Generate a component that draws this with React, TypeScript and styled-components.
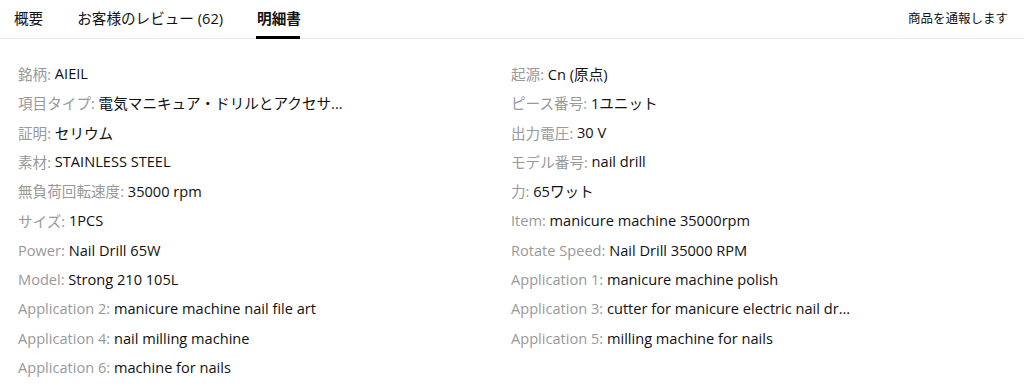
import styled, { createGlobalStyle } from "styled-components";

const GlobalStyle = createGlobalStyle`
  body {
    margin: 0;
    background: #fff;
    font-family: "Open Sans", "Noto Sans CJK JP", sans-serif;
    color: #111;
  }
`;

const tabs = [
  { label: "概要", active: false },
  { label: "お客様のレビュー (62)", active: false },
  { label: "明細書", active: true },
];

const specs: [string, string][] = [
  ["銘柄", "AIEIL"],
  ["起源", "Cn (原点)"],
  ["項目タイプ", "電気マニキュア・ドリルとアクセサ..."],
  ["ピース番号", "1ユニット"],
  ["証明", "セリウム"],
  ["出力電圧", "30 V"],
  ["素材", "STAINLESS STEEL"],
  ["モデル番号", "nail drill"],
  ["無負荷回転速度", "35000 rpm"],
  ["力", "65ワット"],
  ["サイズ", "1PCS"],
  ["Item", "manicure machine 35000rpm"],
  ["Power", "Nail Drill 65W"],
  ["Rotate Speed", "Nail Drill 35000 RPM"],
  ["Model", "Strong 210 105L"],
  ["Application 1", "manicure machine polish"],
  ["Application 2", "manicure machine nail file art"],
  ["Application 3", "cutter for manicure electric nail dr..."],
  ["Application 4", "nail milling machine"],
  ["Application 5", "milling machine for nails"],
  ["Application 6", "machine for nails"],
];

export default function App() {
  return (
    <>
      <GlobalStyle />
      <Page>
        <TabBar>
          <TabList>
            {tabs.map((t) => (
              <Tab key={t.label} $active={t.active}>
                {t.label}
              </Tab>
            ))}
          </TabList>
          <Report>商品を通報します</Report>
        </TabBar>
        <SpecGrid>
          {specs.map(([k, v]) => (
            <SpecRow key={k}>
              <SpecKey>{k}: </SpecKey>
              <SpecValue>{v}</SpecValue>
            </SpecRow>
          ))}
        </SpecGrid>
      </Page>
    </>
  );
}

const Page = styled.div`
  width: 1024px;
`;

const TabBar = styled.div`
  display: flex;
  justify-content: space-between;
  align-items: stretch;
  height: 38px;
  border-bottom: 1px solid #e6e6e6;
  padding: 0 16px 0 14px;
`;

const TabList = styled.div`
  display: flex;
  gap: 34px;
`;

const Tab = styled.div<{ $active: boolean }>`
  position: relative;
  display: flex;
  align-items: center;
  padding-bottom: 3px;
  font-size: 14.6px;
  font-weight: ${(p) => (p.$active ? 700 : 400)};
  color: #111;
  &::after {
    content: "";
    display: ${(p) => (p.$active ? "block" : "none")};
    position: absolute;
    left: -1px;
    right: 1px;
    bottom: -1px;
    height: 3px;
    background: #000;
  }
`;

const Report = styled.div`
  display: flex;
  align-items: center;
  padding-bottom: 3px;
  font-size: 12.5px;
  color: #111;
`;

const SpecGrid = styled.div`
  display: grid;
  grid-template-columns: 493px 493px;
  grid-auto-rows: 29.4px;
  padding: 19.6px 0 0 18px;
`;

const SpecRow = styled.div`
  display: flex;
  align-items: center;
  font-size: 14.6px;
  white-space: nowrap;
`;

const SpecKey = styled.span`
  color: #999;
  white-space: pre;
`;

const SpecValue = styled.span`
  color: #111;
`;
